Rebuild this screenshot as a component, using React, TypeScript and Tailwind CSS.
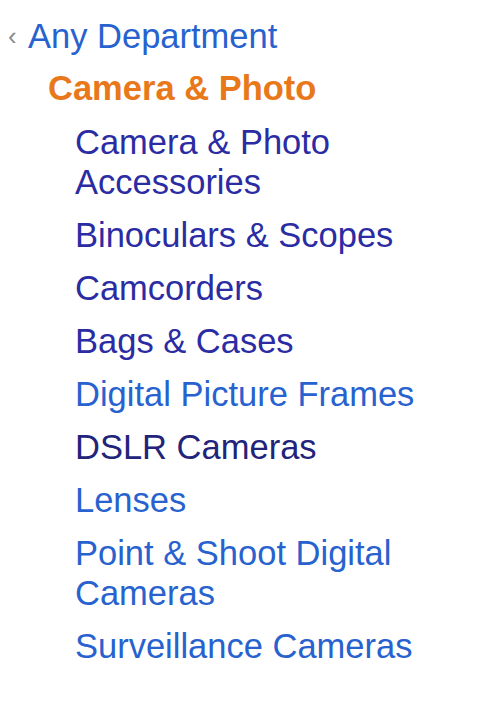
const items: { label: string; visited?: boolean; dark?: boolean }[] = [
  { label: "Camera & Photo Accessories", visited: true },
  { label: "Binoculars & Scopes", visited: true },
  { label: "Camcorders", visited: true },
  { label: "Bags & Cases", visited: true },
  { label: "Digital Picture Frames" },
  { label: "DSLR Cameras", dark: true },
  { label: "Lenses" },
  { label: "Point & Shoot Digital Cameras" },
  { label: "Surveillance Cameras" },
];

export default function App() {
  return (
    <div
      className="h-[710px] w-[500px] bg-white pt-4 text-[34.5px] leading-[40px]"
      style={{ fontFamily: '"Liberation Sans", Arial, sans-serif' }}
    >
      <div className="flex items-center pl-2">
        <span className="w-5 text-[26px] text-[#8a8a8a]">‹</span>
        <a className="text-[#2762cf]">Any Department</a>
      </div>

      <div className="mt-3 pl-12 font-bold text-[#e8781a]">Camera &amp; Photo</div>

      <ul className="mt-[14px] flex w-[425px] flex-col gap-[13px] pl-[75px]">
        {items.map((item) => (
          <li key={item.label}>
            <a
              className={
                item.dark
                  ? "text-[#22237a]"
                  : item.visited
                    ? "text-[#2b2ca3]"
                    : "text-[#2762cf]"
              }
            >
              {item.label}
            </a>
          </li>
        ))}
      </ul>
    </div>
  );
}
